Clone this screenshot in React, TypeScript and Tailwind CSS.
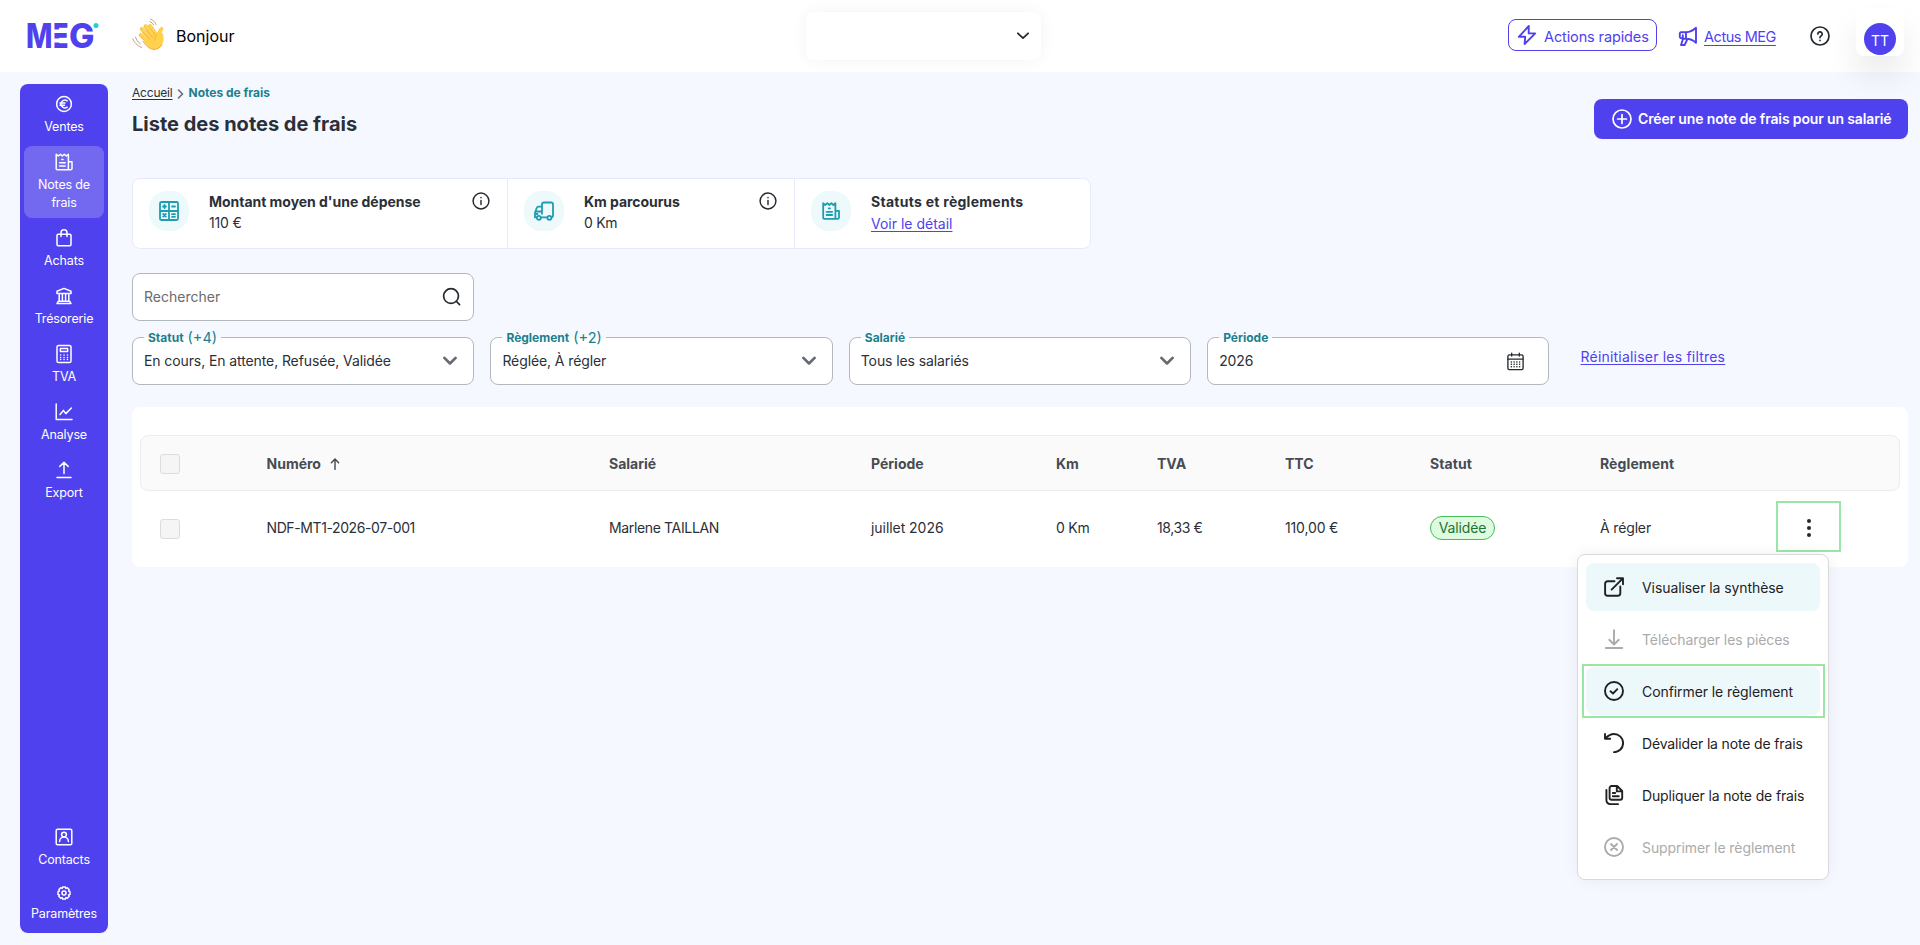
import type { ReactNode } from "react";

function Icon({ size = 20, sw = 1.5, className = "", children }: { size?: number; sw?: number; className?: string; children: ReactNode }) {
  return (
    <svg
      width={size}
      height={size}
      viewBox="0 0 20 20"
      fill="none"
      stroke="currentColor"
      strokeWidth={sw}
      strokeLinecap="round"
      strokeLinejoin="round"
      className={`shrink-0 ${className}`}
      aria-hidden="true"
    >
      {children}
    </svg>
  );
}

const receipt = (
  <>
    <path d="M14.400 17.800V2.200l-2 1.800-2.100-1.800-2 1.800-2-1.800-2 1.800-2.100-1.800v14.600a1 1 0 0 0 1 1h13.400a1.400 1.400 0 0 0 1.400-1.400V9.800h-3.600" />
    <path d="M7.800 7.400h1.200M5.600 10.800h5.600M5.600 14h5.600" />
  </>
);

const mainNav = [
  {
    label: "Ventes",
    icon: (
      <>
        <circle cx="10" cy="10" r="7.400" />
        <path d="M13.200 6.800a3.900 3.900 0 1 0 0 6.400M6 9h5M6 11.200h4.500" />
      </>
    ),
  },
  { label: "Notes de frais", active: true, icon: receipt },
  {
    label: "Achats",
    icon: (
      <>
        <rect x="3" y="6.200" width="14" height="11.600" rx="1.200" />
        <path d="M7 8.400V4.800a3 3 0 0 1 6 0v3.600" />
      </>
    ),
  },
  {
    label: "Trésorerie",
    icon: (
      <path d="M3 5.200 10 2.400l7 2.800v2.200H3zM4.400 15.200 3 17.600h14l-1.400-2.400zM5.200 7.600v7.400M8.400 7.600v7.400M11.600 7.600v7.400M14.800 7.600v7.400" />
    ),
  },
  {
    label: "TVA",
    icon: (
      <>
        <rect x="3" y="1.400" width="14" height="17.200" rx="1.600" />
        <rect x="6.400" y="4.600" width="7.200" height="3" />
        <path d="M6.600 11h.1M10 11h.1M13.400 11h.1M6.600 13.400h.1M10 13.400h.1M13.400 13.400h.1M6.600 15.600h.1M10 15.600h.1M13.400 15.600h.1" />
      </>
    ),
  },
  {
    label: "Analyse",
    icon: <path d="M2.200 2v15.600H18M6 12.400l3.400-4 2.400 3.200L17.400 6" />,
  },
  {
    label: "Export",
    icon: <path d="M10 13.400V2.600M5.800 6.400 10 2.400l4.200 4M3 17.600h14" />,
  },
];

const bottomNav = [
  {
    label: "Contacts",
    icon: (
      <>
        <rect x="2.200" y="2.200" width="15.600" height="15.600" rx="1.400" />
        <circle cx="10" cy="7.600" r="2.400" />
        <path d="M5.600 14.400a4.400 4.400 0 0 1 8.800 0" />
      </>
    ),
  },
  {
    label: "Paramètres",
    icon: (
      <g transform="translate(0 2)">
        <circle cx="10" cy="10" r="2" />
        <path d="M8.600 4h2.800l.5 1.400 1.400-.6 1.900 1.900-.6 1.400 1.400.5v2.800l-1.400.5.6 1.400-1.900 1.900-1.400-.6-.5 1.400H8.600l-.5-1.400-1.400.6-1.900-1.900.6-1.400L4 11.400V8.600l1.400-.5-.6-1.400 1.900-1.900 1.400.6z" />
      </g>
    ),
  },
];

function NavItem({ item }: { item: { label: string; active?: boolean; icon: ReactNode } }) {
  return (
    <a
      className={`flex flex-col items-center gap-1 rounded-lg px-2.5 py-1.5 text-center text-[12.5px] leading-[18px] tracking-[-0.15px] text-white ${
        item.active ? "bg-[#7369f1]" : ""
      }`}
    >
      <Icon>{item.icon}</Icon>
      <span className="w-[60px]">
        <span className="-mx-2 block px-1">{item.label}</span>
      </span>
    </a>
  );
}

function Logo() {
  return (
    <svg width="75" height="44" viewBox="-2 -10 75 44" className="-ml-0.5" fontFamily="Inter, sans-serif" fontWeight="800" fontSize="33.500" fill="#4f42ee">
      <text x="-2" y="25" textLength="26.500" lengthAdjust="spacingAndGlyphs">M</text>
      <text x="25" y="25" textLength="15.500" lengthAdjust="spacingAndGlyphs">E</text>
      <path d="M25 6.500h7v3.500h-7zM25 15.500h7v4h-7z" fill="#fff" />
      <text x="41" y="25" textLength="25.500" lengthAdjust="spacingAndGlyphs">G</text>
      <circle cx="68" cy="2.600" r="2.500" fill="#1fd0de" />
    </svg>
  );
}

function WavingHand() {
  return (
    <svg width="33" height="33" viewBox="0 0 33 33" className="shrink-0" fill="none" strokeLinecap="round" strokeLinejoin="round">
      <g stroke="#f7bd3a" strokeWidth="4">
        <path d="m9.800 11 10 11M13.500 8.300l9 11M18 8.200l7 10M8.800 16.800l9 9" />
      </g>
      <g stroke="#ffd557" strokeWidth="3">
        <path d="m10.200 10.600 10 11M13.900 8l9 11M18.300 7.800l7 10M9.100 16.400l9 9" />
      </g>
      <path d="M29.600 10.800c-1.800 1.600-2.400 3.400-2.300 6.200" stroke="#ffd14d" strokeWidth="3.800" />
      <path d="M23 14.500c3-.5 6.500-1 8 1.500 1.200 4 .6 9.500-2.500 12.800-3.300 3.300-8.500 3.300-12 .4L11 23l6-6z" fill="#ffd14d" />
      <path d="M11 23.500c3 4 6 7.300 10 7.900 4 .3 7-1.400 8.700-4.400" stroke="#f3aa35" strokeWidth="1" />
      <g stroke="#f0a630" strokeWidth="0.700">
        <path d="m11.500 14.800 6.500 6.700M14.500 12l6 7.300M18.500 10.800l4.800 6.200M25 16.500c-1.800 1.500-2.400 3.200-2 5.500" />
      </g>
      <g stroke="#b48a66" strokeWidth="0.800">
        <path d="M18.500 1c2.500 1 4.500 2.800 5.500 5.500M17.800 3.500c1.800.8 3 1.800 3.800 3.500M3.500 19c.8 2.800 2.300 5 4.800 6.800M.8 20.500c1.200 4 4 7 9 9" />
      </g>
    </svg>
  );
}

function Header() {
  return (
    <header className="relative z-10 flex h-[72px] bg-white">
      <div className="flex w-[806px] items-start pl-7">
        <div className="mt-[13px] w-[104px]">
          <Logo />
        </div>
        <div className="mt-[18px]">
          <WavingHand />
        </div>
        <span className="ml-[11px] mt-6 text-base leading-6 text-black">Bonjour</span>
      </div>
      <div className="mt-3 flex h-12 w-[235px] items-center justify-end rounded-lg bg-white pr-3 shadow-[0_0_16px_rgba(0,0,0,0.05)]">
        <Icon size={12} sw={3} className="text-[#24292f]">
          <path d="m1.500 5.500 8.500 8 8.500-8" />
        </Icon>
      </div>
      <div className="ml-auto flex items-start pr-4">
        <button className="mt-[19px] flex h-8 w-[149px] items-center gap-[7px] rounded-lg border border-[#4f42ee] pl-2 text-[14.500px] text-[#4f42ee]">
          <Icon sw={1.900}>
            <path d="M11.800 1 1.800 11.800h6.400L7.600 19 18.200 8.400h-6.500z" />
          </Icon>
          <span className="pt-[3px] whitespace-nowrap tracking-[-0.120px]">Actions rapides</span>
        </button>
        <a className="ml-[21px] mt-[26px] flex gap-1.5 text-[14.500px] leading-5 text-[#4f42ee]">
          <Icon sw={1.900}>
            <path d="M2.800 6.200h5.400c4 0 7-1.800 9.800-4.400v15c-2.800-2.600-5.800-4-9.800-4H5.600M2.800 6.200a1.500 1.500 0 0 0-1 1.300v3.200a1.500 1.500 0 0 0 1.500 1.500h1.500v-3M8 6.400v6.200M5 13l-2 6h3.600l2.800-5.800" />
          </Icon>
          <span className="mt-px w-[72px] whitespace-nowrap tracking-[-0.450px] underline underline-offset-[3px]">Actus MEG</span>
        </a>
        <div className="ml-[34px] mt-[26px]">
          <Icon className="text-[#24292f]" sw={1.700}>
            <circle cx="10" cy="10" r="9" />
            <path d="M7.800 8a2.200 2.200 0 1 1 3.300 1.900c-.8.500-1.100.900-1.100 1.700M10 14.300v.1" />
          </Icon>
        </div>
        <div className="ml-[26px] mt-2 flex h-12 w-12 items-end justify-center rounded-lg bg-white pb-px shadow-[0_20px_32px_rgba(0,0,0,0.08)]">
          <span className="flex h-8 w-8 items-center justify-center rounded-full bg-[#4f42ee] pt-0.5 text-[14px] text-white">TT</span>
        </div>
      </div>
    </header>
  );
}

function StatCard({ title, icon, info, className, children }: { title: ReactNode; icon: ReactNode; info?: boolean; className: string; children: ReactNode }) {
  return (
    <div className={`flex gap-5 border-[#e9e9fc] pl-4 pr-[17px] pt-3 ${className}`}>
      <div className="flex h-10 w-10 shrink-0 items-center justify-center rounded-[18px] bg-[#edf9fa] text-[#1f9cb2]">
        <Icon sw={1.800}>{icon}</Icon>
      </div>
      <div className="flex-1 text-[14px] leading-[21px] whitespace-nowrap text-[#2b2f38]">
        <div className="font-bold">{title}</div>
        {children}
      </div>
      {info && (
        <Icon size={18} sw={1.600} className="mt-px text-[#24292f]">
          <circle cx="10" cy="10" r="8.800" />
          <path d="M10 9.500v4.300M10 6.200v.2" />
        </Icon>
      )}
    </div>
  );
}

function Field({ label, count, value, icon }: { label: string; count?: string; value: string; icon: ReactNode }) {
  return (
    <div className="relative flex h-12 w-[342.300px] items-center justify-between rounded-lg border border-[#b3b7be] bg-white pl-[11px] text-[14px] text-[#2b2f38]">
      <span className="absolute -top-2.5 left-[11px] flex items-center bg-[linear-gradient(#f5f8ff_50%,#fff_50%)] px-1 text-[12px] leading-5 font-bold whitespace-nowrap text-[#1b7f8e]">
        {label}
        {count && <span className="ml-1 pb-px text-[14.500px] leading-[19px] font-normal">{count}</span>}
      </span>
      <span className="pb-0.5 whitespace-nowrap tracking-[-0.1px]">{value}</span>
      {icon}
    </div>
  );
}

const chevron = (
  <Icon size={14} sw={3.800} className="mr-4 text-[#666b73]">
    <path d="m2 5.500 8 8 8-8" />
  </Icon>
);

function Filters() {
  return (
    <div className="mt-6">
      <div className="flex h-12 w-[342px] items-center justify-between rounded-lg border border-[#b3b7be] bg-white pl-[11px] pr-3 text-[14px] text-[#6b6b6b]">
        <span className="pb-0.5">Rechercher</span>
        <Icon size={19} sw={1.800} className="mb-px text-[#24292f]">
          <circle cx="9.500" cy="9.500" r="7.800" />
          <path d="m15 15 3.500 3.500" />
        </Icon>
      </div>
      <div className="mt-4 flex gap-[16.100px]">
        <Field label="Statut" count="(+4)" value="En cours, En attente, Refusée, Validée" icon={chevron} />
        <Field label="Règlement" count="(+2)" value="Réglée, À régler" icon={chevron} />
        <Field label="Salarié" value="Tous les salariés" icon={chevron} />
        <Field
          label="Période"
          value="2026"
          icon={
            <Icon size={19} sw={1.400} className="mr-[23px] text-[#24292f]">
              <rect x="2" y="3" width="16" height="15.500" rx="1.500" />
              <path d="M2 7.500h16M6 1.300v3M14 1.300v3" />
              <path strokeWidth="1.600" d="M5.600 10.500h.1M8.500 10.500h.1M11.400 10.500h.1M14.300 10.500h.1M5.600 13h.1M8.500 13h.1M11.400 13h.1M14.300 13h.1M5.600 15.500h.1M8.500 15.500h.1M11.400 15.500h.1M14.300 15.500h.1" />
            </Icon>
          }
        />
        <a className="ml-[15px] mt-2.5 text-[14px] leading-5 tracking-[0.2px] text-[#4f42ee] underline underline-offset-2">Réinitialiser les filtres</a>
      </div>
    </div>
  );
}

const menu = [
  {
    label: "Visualiser la synthèse",
    highlighted: true,
    icon: <path d="M10.500 4.200H3.600a2.500 2.500 0 0 0-2.500 2.500v9.600a2.500 2.500 0 0 0 2.500 2.500h10.200a2.500 2.500 0 0 0 2.500-2.500v-6.800M13 1.200h6v6M18.600 1.600 7.600 12.600" />,
  },
  { label: "Télécharger les pièces", disabled: true, icon: <path d="M10 1.200V15M5.200 10.800l4.800 4.700 4.800-4.700M1.800 19h16.400" /> },
  {
    label: "Confirmer le règlement",
    highlighted: true,
    outlined: true,
    icon: (
      <>
        <circle cx="10" cy="10" r="9" />
        <path d="m6.500 10.300 2.500 2.200 4.300-4.300" />
      </>
    ),
  },
  { label: "Dévalider la note de frais", tight: true, icon: <path d="M1 1v4.800h5.200M1.600 5.200C4.600 2 7 1 10 1a9 9 0 0 1 0 18.200" /> },
  {
    label: "Dupliquer la note de frais",
    tight: true,
    icon: (
      <>
        <path d="M7.600 1h5.600l5 5v6.800a2 2 0 0 1-2 2H7.600a2 2 0 0 1-2-2V3a2 2 0 0 1 2-2zM12.800 1.400v5h5M8.800 8h2.400M8.800 11.200h6" />
        <path d="M2.400 5v10.200a4 4 0 0 0 4 4H14" />
      </>
    ),
  },
  {
    label: "Supprimer le règlement",
    disabled: true,
    icon: (
      <>
        <circle cx="10" cy="10" r="9" />
        <path d="m7 7 6 6M13 7l-6 6" />
      </>
    ),
  },
];

function ActionsMenu() {
  return (
    <div className="absolute top-[147px] left-[1445px] z-20 flex w-[252px] flex-col gap-1 rounded-lg border border-[#d8dadc] bg-white p-2 shadow-[0_0_16px_rgba(0,0,0,0.06)]">
      {menu.map((item) => (
        <div
          key={item.label}
          className={`relative flex h-12 items-center gap-[18px] rounded-lg pl-[18px] text-[14px] ${item.highlighted ? "bg-[#edf8fb]" : ""} ${
            item.disabled ? "text-[#ababab]" : "text-[#1f2123]"
          }`}
        >
          <Icon sw={1.900}>{item.icon}</Icon>
          <span className={`whitespace-nowrap ${item.tight ? "tracking-[-0.15px]" : "tracking-[-0.08px]"}`}>{item.label}</span>
          {item.outlined && <span className="absolute -inset-y-[3px] -right-[5px] -left-1 border-2 border-[#9be6a6]" />}
        </div>
      ))}
    </div>
  );
}

const columns = "grid grid-cols-[106.500px_342.500px_262px_185px_101px_128px_145px_170px_176px_1fr] items-center text-[14px] whitespace-nowrap";

function Checkbox() {
  return <span className="block h-5 w-5 rounded-[3px] border border-[#dcdcdc] bg-[#f5f5f5]" />;
}

function ExpenseTable() {
  return (
    <div className="relative mt-[22px] h-40 rounded-lg bg-white px-2 pt-7">
      <div className={`${columns} h-14 rounded-lg border border-[#ececec] bg-[#fafafa] pt-px pl-[19px] font-bold text-[#474b52]`}>
        <Checkbox />
        <span className="flex items-center gap-2">
          Numéro
          <Icon size={12} sw={2.400}>
            <path d="M10 19V2M4 8l6-6.500L16 8" />
          </Icon>
        </span>
        <span>Salarié</span>
        <span>Période</span>
        <span>Km</span>
        <span>TVA</span>
        <span>TTC</span>
        <span className="tracking-[0.1px]">Statut</span>
        <span className="tracking-[0.1px]">Règlement</span>
      </div>
      <div className={`${columns} h-[74px] pb-0.5 pl-5 tracking-[-0.15px] text-[#2b2f38]`}>
        <span className="pt-[3px]">
          <Checkbox />
        </span>
        <span className="tracking-[-0.4px]">NDF-MT1-2026-07-001</span>
        <span className="tracking-[-0.35px]">Marlene TAILLAN</span>
        <span className="tracking-[-0.05px]">juillet 2026</span>
        <span className="tracking-[-0.25px]">0 Km</span>
        <span className="tracking-[-0.4px]">18,33 €</span>
        <span>110,00 €</span>
        <span className="mt-px flex h-6 w-[65px] items-center justify-center rounded-full border border-[#45bd59] bg-[#dcfbdf] text-[#1e7335]">Validée</span>
        <span>À régler</span>
        <button className="-mt-px flex h-[51px] w-[65px] items-center justify-center border-2 border-[#9be6a6] pt-0.5 text-[#24292f]">
          <svg width="4" height="20" viewBox="0 0 4 20" fill="currentColor">
            <circle cx="2" cy="3" r="2" />
            <circle cx="2" cy="10" r="2" />
            <circle cx="2" cy="17" r="2" />
          </svg>
        </button>
      </div>
      <ActionsMenu />
    </div>
  );
}

export default function App() {
  return (
    <div className="flex h-[945px] w-[1920px] flex-col overflow-hidden bg-[#f5f8ff] font-[Inter,sans-serif]">
      <Header />
      <div className="flex flex-1 gap-6 py-3 pr-3 pl-5">
        <nav className="flex w-[88px] flex-col gap-1 rounded-lg bg-[#4f42ee] p-1">
          {mainNav.map((item) => (
            <NavItem key={item.label} item={item} />
          ))}
          <div className="-mx-1 mt-auto flex flex-col">
            {bottomNav.map((item) => (
              <NavItem key={item.label} item={item} />
            ))}
          </div>
        </nav>

        <main className="flex-1">
          <div className="flex h-[94px] justify-between">
            <div>
              <div className="flex items-center text-[12px] leading-[18px]">
                <a className="tracking-[-0.2px] text-[#2b2f38] underline underline-offset-2">Accueil</a>
                <Icon size={10} sw={3.200} className="mx-[3px] mt-0.5 text-[#666b73]">
                  <path d="m5 2 8 8-8 8" />
                </Icon>
                <span className="font-bold text-[#1b7f8e]">Notes de frais</span>
              </div>
              <h1 className="mt-2 text-[20px] leading-7 font-bold text-[#2b2f38]">Liste des notes de frais</h1>
            </div>
            <button className="mt-[15px] flex h-10 w-[314px] items-center gap-1.5 rounded-lg bg-[#4f42ee] pl-[18px] text-[14px] font-semibold text-white">
              <Icon sw={1.700}>
                <circle cx="10" cy="10" r="9" />
                <path d="M10 5.600v8.800M5.600 10h8.800" />
              </Icon>
              <span className="pb-0.5 whitespace-nowrap tracking-[-0.14px]">Créer une note de frais pour un salarié</span>
            </button>
          </div>

          <div className="flex h-[71px] w-[958.500px] rounded-lg border border-[#e9e9fc] bg-white">
            <StatCard
              className="w-[375px] border-r"
              title={<p className="tracking-[-0.03px]">Montant moyen d'une dépense</p>}
              info
              icon={
                <>
                  <rect x="1" y="1" width="18" height="18" rx="1.500" />
                  <path d="M10 1v18M1 10h18M4 5.500h3M5.500 4v3M13 5.500h3M4.200 13l2.600 2.600M6.800 13l-2.600 2.600M13 13.200h3M13 15.800h3" />
                </>
              }
            >
              <p className="tracking-[-0.15px]">110 €</p>
            </StatCard>
            <StatCard
              className="w-[287px] border-r"
              title={<p className="tracking-[-0.05px]">Km parcourus</p>}
              info
              icon={
                <>
                  <path d="M7 16.400h6.200M8 12.800V3.200A1.700 1.700 0 0 1 9.700 1.500h7.600A1.700 1.700 0 0 1 19 3.200v11.600a1.600 1.600 0 0 1-1.400 1.600M8 5.600H4.600A2 2 0 0 0 2.700 7L1 11.500v4.900h1.600M8 10.500H1.600M1.500 13h2" />
                  <circle cx="4.800" cy="16.800" r="2" />
                  <circle cx="15.400" cy="16.800" r="2" />
                </>
              }
            >
              <p className="tracking-[-0.3px]">0 Km</p>
            </StatCard>
            <StatCard className="flex-1" title={<p className="tracking-[0.27px]">Statuts et règlements</p>} icon={receipt}>
              <a className="relative top-px text-[#4f42ee] underline underline-offset-2">Voir le détail</a>
            </StatCard>
          </div>

          <Filters />
          <ExpenseTable />
        </main>
      </div>
    </div>
  );
}
